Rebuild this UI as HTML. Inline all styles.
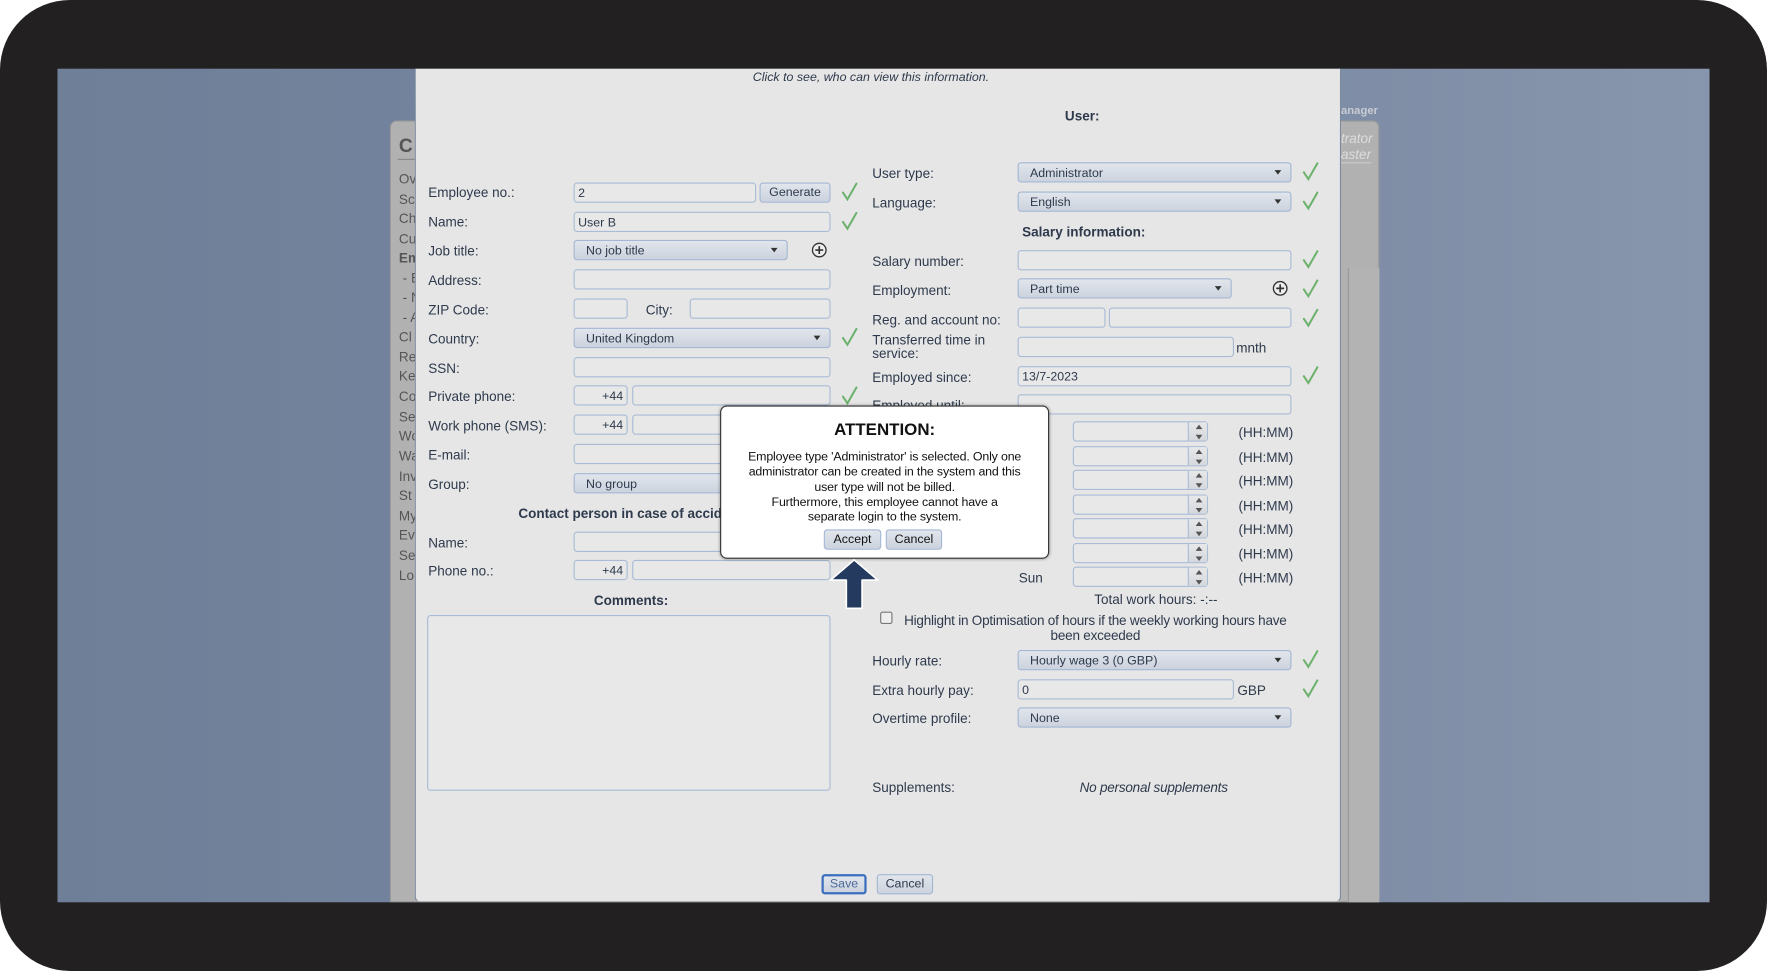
<!DOCTYPE html>
<html><head><meta charset="utf-8"><style>
*{box-sizing:border-box;margin:0;padding:0}
html,body{width:1767px;height:971px;overflow:hidden;background:#fff}
#s{position:absolute;left:0;top:0;width:1568px;height:862px;transform:scale(1.12691,1.12645);transform-origin:0 0;font-family:"Liberation Sans",sans-serif;font-size:12px;color:#2e3a4c}
#s div,#s span{position:absolute}
.frame{left:0;top:0;width:1568px;height:862px;background:#222021;border-radius:62px}
.screen{left:51px;top:61px;width:1466px;height:740px;background:linear-gradient(90deg,#6f7f98 0%,#7686a0 40%,#7f8ea6 80%,#8896ad 100%)}
.bg{left:346px;top:107px;width:878px;height:694px;background:#b1b1b1;border-radius:6px 6px 0 0;border:1px solid #9a9a9a}
.sb{left:354px;color:#555;font-size:12px}
.modal{left:368px;top:61px;width:822px;height:740px;background:#e6e6e6;border-left:1px solid #7c8aa0;border-right:1px solid #7c8aa0;border-bottom:1px solid #aaa;border-radius:0 0 5px 5px}
.l{white-space:nowrap}
.in{height:18px;border:1px solid #a9bbd6;border-radius:3px;background:#e8e8e8;font-size:11px;padding:3px 3px 0;line-height:12px}
.se{height:18px;border:1px solid #a3b6d3;border-radius:3px;background:linear-gradient(#e1e5ec,#ccd3de);font-size:11px;padding:3px 10px 0;line-height:12px}
.se:after{content:"";position:absolute;right:8px;top:6px;border-left:3.5px solid transparent;border-right:3.5px solid transparent;border-top:4px solid #333}
.btn{height:18px;border:1px solid #a3b6d3;border-radius:3px;background:linear-gradient(#e1e5ec,#ccd3de);font-size:11px;text-align:center;line-height:16px}
.b{font-weight:bold}
.sp{width:120px;height:18px;border:1px solid #a9bbd6;border-radius:3px;background:#e8e8e8}
.sp:after{content:"";position:absolute;right:0;top:0;width:16px;height:16px;border-left:1px solid #a9bbd6;background:linear-gradient(#e8e8e8,#d4d8de)}
.hh{left:1099px}
</style></head><body><div id="s">
<div class="frame"></div>
<div class="screen"></div>
<div class="bg"></div>
<div class="l" style="left:1190px;top:93px;color:#c8ccd4;font-weight:bold;font-size:10px">anager</div>
<div class="l" style="left:1190px;top:116px;color:#ddd;font-style:italic">trator</div>
<div class="l" style="left:1190px;top:130px;color:#ddd;font-style:italic;border-bottom:1px solid #ccc">aster</div>
<div style="left:1196px;top:238px;width:28px;height:563px;border-left:1px solid #999;background:#b3b3b3"></div>
<div class="sb b" style="top:120px;font-size:17px">C</div>
<div style="left:353px;top:141px;width:15px;height:1px;background:#888"></div>
<div class="sb" style="top:152px">Ov</div><div class="sb" style="top:170px">Sc</div><div class="sb" style="top:187px">Ch</div><div class="sb" style="top:205px">Cu</div><div class="sb b" style="top:222px">Em</div><div class="sb" style="top:240px">&nbsp;- E</div><div class="sb" style="top:257px">&nbsp;- N</div><div class="sb" style="top:275px">&nbsp;- A</div><div class="sb" style="top:292px">Cl</div><div class="sb" style="top:310px">Re</div><div class="sb" style="top:327px">Ke</div><div class="sb" style="top:345px">Co</div><div class="sb" style="top:363px">Se</div><div class="sb" style="top:380px">Wo</div><div class="sb" style="top:398px">Wa</div><div class="sb" style="top:416px">Inv</div><div class="sb" style="top:433px">St</div><div class="sb" style="top:451px">My</div><div class="sb" style="top:468px">Ev</div><div class="sb" style="top:486px">Se</div><div class="sb" style="top:504px">Lo</div>
<div class="modal"></div>

<div class="l" style="left:668px;top:63px;font-style:italic;font-size:11px">Click to see, who can view this information.</div>
<div class="l b" style="left:945px;top:96px">User:</div>

<div class="l" style="left:380px;top:164px">Employee no.:</div>
<div class="in" style="left:509px;top:162px;width:162px">2</div>
<div class="btn" style="left:674px;top:162px;width:63px">Generate</div>
<div class="l" style="left:380px;top:190px">Name:</div>
<div class="in" style="left:509px;top:188px;width:228px">User B</div>
<div class="l" style="left:380px;top:216px">Job title:</div>
<div class="se" style="left:509px;top:213px;width:190px">No job title</div>
<div class="l" style="left:380px;top:242px">Address:</div>
<div class="in" style="left:509px;top:239px;width:228px"></div>
<div class="l" style="left:380px;top:268px">ZIP Code:</div>
<div class="in" style="left:509px;top:265px;width:48px"></div>
<div class="l" style="left:573px;top:268px">City:</div>
<div class="in" style="left:612px;top:265px;width:125px"></div>
<div class="l" style="left:380px;top:294px">Country:</div>
<div class="se" style="left:509px;top:291px;width:228px">United Kingdom</div>
<div class="l" style="left:380px;top:320px">SSN:</div>
<div class="in" style="left:509px;top:317px;width:228px"></div>
<div class="l" style="left:380px;top:345px">Private phone:</div>
<div class="in" style="left:509px;top:342px;width:48px;text-align:right">+44</div>
<div class="in" style="left:561px;top:342px;width:176px"></div>
<div class="l" style="left:380px;top:371px">Work phone (SMS):</div>
<div class="in" style="left:509px;top:368px;width:48px;text-align:right">+44</div>
<div class="in" style="left:561px;top:368px;width:176px"></div>
<div class="l" style="left:380px;top:397px">E-mail:</div>
<div class="in" style="left:509px;top:394px;width:228px"></div>
<div class="l" style="left:380px;top:423px">Group:</div>
<div class="se" style="left:509px;top:420px;width:228px">No group</div>
<div class="l b" style="left:460px;top:449px">Contact person in case of accident</div>
<div class="l" style="left:380px;top:475px">Name:</div>
<div class="in" style="left:509px;top:472px;width:228px"></div>
<div class="l" style="left:380px;top:500px">Phone no.:</div>
<div class="in" style="left:509px;top:497px;width:48px;text-align:right">+44</div>
<div class="in" style="left:561px;top:497px;width:176px"></div>
<div class="l b" style="left:527px;top:526px">Comments:</div>
<div style="left:379px;top:546px;width:358px;height:156px;border:1px solid #a9bbd6;border-radius:3px;background:#e8e8e8"></div>

<div class="l" style="left:774px;top:147px">User type:</div>
<div class="se" style="left:903px;top:144px;width:243px">Administrator</div>
<div class="l" style="left:774px;top:173px">Language:</div>
<div class="se" style="left:903px;top:170px;width:243px">English</div>
<div class="l b" style="left:907px;top:199px">Salary information:</div>
<div class="l" style="left:774px;top:225px">Salary number:</div>
<div class="in" style="left:903px;top:222px;width:243px"></div>
<div class="l" style="left:774px;top:251px">Employment:</div>
<div class="se" style="left:903px;top:247px;width:190px">Part time</div>
<div class="l" style="left:774px;top:277px">Reg. and account no:</div>
<div class="in" style="left:903px;top:273px;width:78px"></div>
<div class="in" style="left:984px;top:273px;width:162px"></div>
<div class="l" style="left:774px;top:296px;line-height:12px">Transferred time in<br>service:</div>
<div class="in" style="left:903px;top:299px;width:192px"></div>
<div class="l" style="left:1097px;top:302px">mnth</div>
<div class="l" style="left:774px;top:328px">Employed since:</div>
<div class="in" style="left:903px;top:325px;width:243px">13/7-2023</div>
<div class="l" style="left:774px;top:353px">Employed until:</div>
<div class="in" style="left:903px;top:350px;width:243px"></div>

<div class="sp" style="left:952px;top:374px"></div><div class="l hh" style="top:377px">(HH:MM)</div>
<div class="sp" style="left:952px;top:396px"></div><div class="l hh" style="top:399px">(HH:MM)</div>
<div class="sp" style="left:952px;top:417px"></div><div class="l hh" style="top:420px">(HH:MM)</div>
<div class="sp" style="left:952px;top:439px"></div><div class="l hh" style="top:442px">(HH:MM)</div>
<div class="sp" style="left:952px;top:460px"></div><div class="l hh" style="top:463px">(HH:MM)</div>
<div class="sp" style="left:952px;top:482px"></div><div class="l hh" style="top:485px">(HH:MM)</div>
<div class="sp" style="left:952px;top:503px"></div><div class="l hh" style="top:506px">(HH:MM)</div>
<div class="l" style="left:904px;top:506px">Sun</div>
<div class="l" style="left:971px;top:525px">Total work hours: -:--</div>
<div style="left:781px;top:543px;width:11px;height:11px;border:1px solid #777;border-radius:2px;background:#eee"></div>
<div style="left:796px;top:545px;width:352px;text-align:center;line-height:13px;letter-spacing:-0.2px">Highlight in Optimisation of hours if the weekly working hours have been exceeded</div>
<div class="l" style="left:774px;top:580px">Hourly rate:</div>
<div class="se" style="left:903px;top:577px;width:243px">Hourly wage 3 (0 GBP)</div>
<div class="l" style="left:774px;top:606px">Extra hourly pay:</div>
<div class="in" style="left:903px;top:603px;width:192px">0</div>
<div class="l" style="left:1098px;top:606px">GBP</div>
<div class="l" style="left:774px;top:631px">Overtime profile:</div>
<div class="se" style="left:903px;top:628px;width:243px">None</div>
<div class="l" style="left:774px;top:692px">Supplements:</div>
<div class="l" style="left:958px;top:692px;font-style:italic;letter-spacing:-0.2px">No personal supplements</div>

<div class="btn" style="left:729px;top:776px;width:40px;border:2px solid #3a6fc0;color:#4a6a9a;line-height:14px">Save</div>
<div class="btn" style="left:778px;top:776px;width:50px">Cancel</div>

<svg style="position:absolute;left:0;top:0" width="1568" height="862">
<defs><path id="c" d="M-6 0 L-2 6 L6 -8" fill="none" stroke="#6cb26c" stroke-width="1.8" stroke-linecap="round"/>
<g id="p"><circle r="6" fill="#eee" stroke="#333" stroke-width="1.2"/><path d="M-3.5 0H3.5M0 -3.5V3.5" stroke="#333" stroke-width="1.5"/></g></defs>
<use href="#c" x="754" y="171"/><use href="#c" x="754" y="197"/><use href="#c" x="754" y="300"/><use href="#c" x="754" y="352"/>
<use href="#c" x="1163" y="153"/><use href="#c" x="1163" y="179"/><use href="#c" x="1163" y="231"/><use href="#c" x="1163" y="257"/><use href="#c" x="1163" y="283"/><use href="#c" x="1163" y="334"/><use href="#c" x="1163" y="586"/><use href="#c" x="1163" y="612"/>
<use href="#p" x="727" y="222"/><use href="#p" x="1136" y="256"/>
<g fill="#555"><path d="M1061 381l3-4 3 4z M1061 386l3 4 3-4z"/><path d="M1061 403l3-4 3 4z M1061 408l3 4 3-4z"/><path d="M1061 424l3-4 3 4z M1061 429l3 4 3-4z"/><path d="M1061 446l3-4 3 4z M1061 451l3 4 3-4z"/><path d="M1061 467l3-4 3 4z M1061 472l3 4 3-4z"/><path d="M1061 489l3-4 3 4z M1061 494l3 4 3-4z"/><path d="M1061 510l3-4 3 4z M1061 515l3 4 3-4z"/></g>
</svg>

<div style="left:639px;top:360px;width:292px;height:136px;background:#fff;border:1px solid #333;border-radius:6px;box-shadow:0 0 3px rgba(0,0,0,.4)"></div>
<div class="b" style="left:639px;top:373px;width:292px;text-align:center;font-size:15px;color:#111">ATTENTION:</div>
<div style="left:648px;top:400px;width:274px;text-align:center;font-size:11px;line-height:13.3px;color:#111;letter-spacing:-0.15px">Employee type 'Administrator' is selected. Only one administrator can be created in the system and this<br>user type will not be billed.<br>Furthermore, this employee cannot have a<br>separate login to the system.</div>
<div class="btn" style="left:731px;top:470px;width:51px;color:#111">Accept</div>
<div class="btn" style="left:786px;top:470px;width:50px;color:#111">Cancel</div>
<svg style="position:absolute;left:734px;top:494px" width="48" height="50"><path d="M24 3 L45 21 L31 21 L31 46 L17 46 L17 21 L3 21 Z" fill="#243a5e" stroke="#fff" stroke-width="1.5" stroke-linejoin="round"/></svg>
</div></body></html>
